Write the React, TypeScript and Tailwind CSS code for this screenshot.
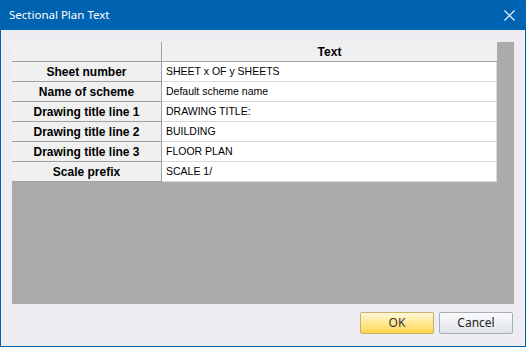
const rows: [string, string][] = [
  ["Sheet number", "SHEET x OF y SHEETS"],
  ["Name of scheme", "Default scheme name"],
  ["Drawing title line 1", "DRAWING TITLE:"],
  ["Drawing title line 2", "BUILDING"],
  ["Drawing title line 3", "FLOOR PLAN"],
  ["Scale prefix", "SCALE 1/"],
];

function CloseIcon() {
  return (
    <svg width="11" height="11" viewBox="0 0 11 11" className="text-white">
      <path d="M0.5 0.5 L10.5 10.5 M10.5 0.5 L0.5 10.5" stroke="currentColor" strokeWidth="1.1" fill="none" />
    </svg>
  );
}

export default function App() {
  return (
    <div className="w-[526px] h-[347px] flex flex-col bg-[#0063b1] px-px pb-px font-['Noto_Sans',sans-serif]">
      {/* title bar */}
      <div className="h-[30px] flex items-center justify-between pl-[8px] pr-[10px]">
        <span className="text-white text-[11.5px]">Sectional Plan Text</span>
        <CloseIcon />
      </div>

      <div className="flex-1 flex flex-col bg-[#eeedf2] pl-[11px] pr-[11px] pt-[12px]">
        {/* grid */}
        <div className="h-[262px] bg-[#ababab] font-['Liberation_Sans',Arial,sans-serif] text-black">
          <div className="w-[485px] flex flex-col">
            <div className="flex h-[20px]">
              <div className="w-[150px] bg-[#f0f0f0] border-r border-b border-[#a0a0a0]" />
              <div className="w-[335px] bg-[#f0f0f0] border-b border-[#a0a0a0] flex items-center justify-center text-[12px] font-bold">
                Text
              </div>
            </div>
            {rows.map(([label, value]) => (
              <div key={label} className="flex h-[20px]">
                <div className="w-[150px] bg-[#f0f0f0] border-r border-b border-[#a0a0a0] flex items-center justify-center text-[12px] font-bold">
                  {label}
                </div>
                <div className="w-[335px] bg-white border-r border-b border-[#dadada] flex items-center pl-[4px] text-[10.5px]">
                  {value}
                </div>
              </div>
            ))}
          </div>
        </div>

        {/* buttons */}
        <div className="flex justify-end gap-[5px] mt-[8px] pr-px">
          <button className="w-[74px] h-[22px] rounded-[2px] border border-[#c9b16a] bg-gradient-to-b from-[#fff8d9] via-[#ffe792] to-[#ffd54a] text-[12px] text-[#333]">
            OK
          </button>
          <button className="w-[74px] h-[22px] rounded-[2px] border border-[#a7adb5] bg-gradient-to-b from-[#fbfbfc] via-[#eef0f3] to-[#dfe2e7] text-[12px] text-[#222]">
            Cancel
          </button>
        </div>
      </div>
    </div>
  );
}
